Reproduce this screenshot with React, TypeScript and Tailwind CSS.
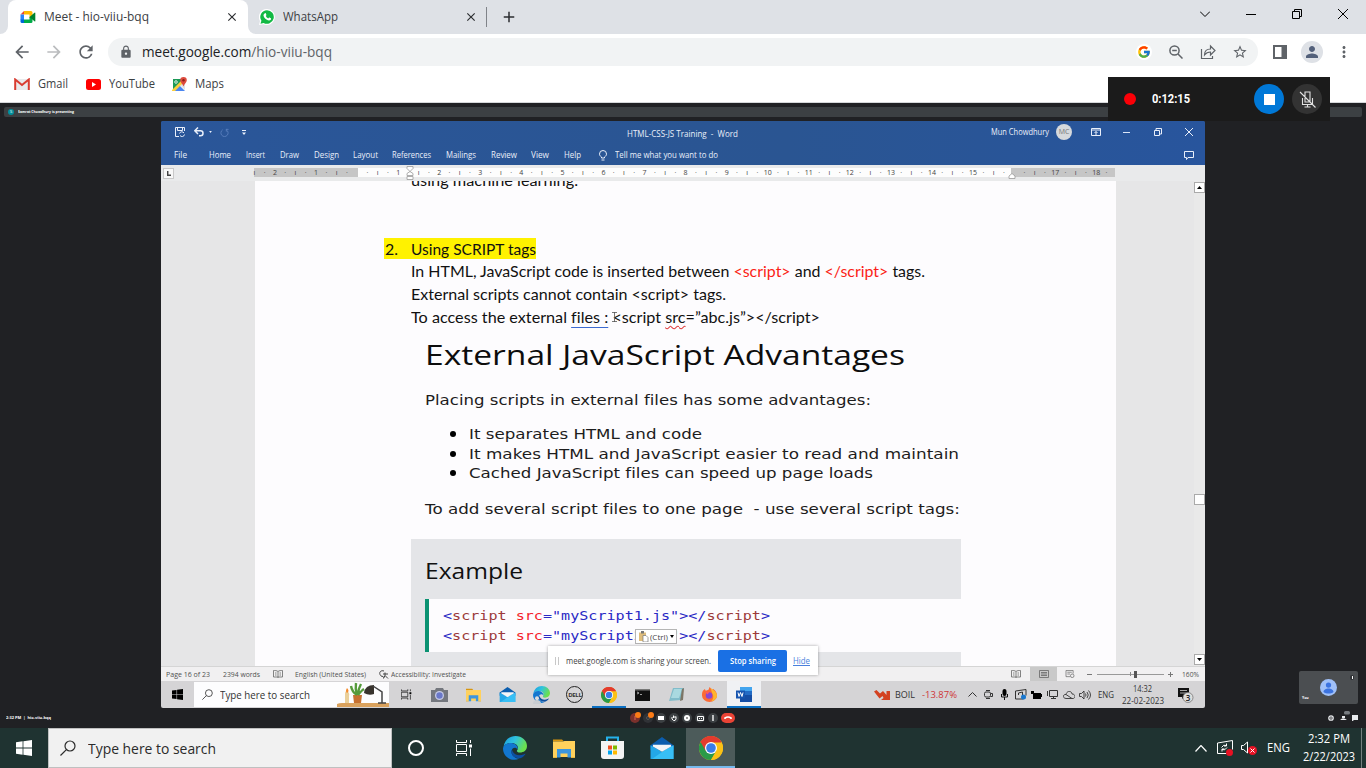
import { useLayoutEffect, useRef, useState } from "react";
import type { ReactNode } from "react";
import { MdArrowBack, MdArrowForward, MdRefresh, MdLock, MdStarBorder, MdMoreVert, MdPerson, MdClose, MdAdd } from "react-icons/md";
import { FcGoogle } from "react-icons/fc";
import { FaPhoneAlt } from "react-icons/fa";

/** One line of text, stretched horizontally to the width of its box. */
function Fit({ className = "", children }: { className?: string; children: ReactNode }) {
  const outer = useRef<HTMLSpanElement>(null);
  const inner = useRef<HTMLSpanElement>(null);
  const [scale, setScale] = useState(1);
  useLayoutEffect(() => {
    if (outer.current && inner.current && inner.current.offsetWidth) {
      const natural = parseFloat(getComputedStyle(inner.current).width);
      const target = parseFloat(getComputedStyle(outer.current).width);
      setScale(target / natural);
    }
  }, []);
  return (
    <span ref={outer} className={`block shrink-0 whitespace-pre ${className}`}>
      <span ref={inner} className="inline-block origin-left align-top" style={{ transform: `scaleX(${scale})` }}>
        {children}
      </span>
    </span>
  );
}

const Cell = ({ className = "", children }: { className?: string; children?: ReactNode }) => (
  <div className={`flex shrink-0 items-center justify-center ${className}`}>{children}</div>
);

/* ---------- logos ---------- */
const Chrome = ({ className }: { className: string }) => (
  <svg viewBox="0 0 48 48" className={className}>
    <circle cx="24" cy="24" r="24" fill="#fbc116" />
    <path d="M24 24 L3.2 12 A24 24 0 0 1 44.8 12 Z" fill="#e33b2e" />
    <path d="M24 24 L3.2 12 A24 24 0 0 0 24 48 L34.4 30 Z" fill="#2a9a48" />
    <path d="M24 12 H44.8 A24 24 0 0 1 24 48 L34.4 30Z" fill="#fbc116" />
    <path d="M24 13 H44.8 A24 24 0 0 0 3.2 12 L13.6 30Z" fill="#e33b2e" />
    <circle cx="24" cy="24" r="12" fill="#fff" />
    <circle cx="24" cy="24" r="9.6" fill="#3b7de8" />
  </svg>
);
const Edge = ({ className }: { className: string }) => (
  <svg viewBox="0 0 48 48" className={className}>
    <defs>
      <linearGradient id="edgeTop" x1="0" x2="1" y1="0" y2="0.4">
        <stop offset="0" stopColor="#1a9be0" />
        <stop offset=".5" stopColor="#2fc2df" />
        <stop offset="1" stopColor="#6be04d" />
      </linearGradient>
    </defs>
    <path d="M1 22 C3 8 13 0 25 0 C38 0 48 9 48 20 C48 29 41 33 34 33 C29 33 27 31 28 29 C33 23 28 14 17 14 C9 14 3 17 1 22Z" fill="url(#edgeTop)" />
    <path d="M0 25 C1 17 9 13 17 14 C26 15 31 22 29 27 C26 21 18 23 17 30 C16 40 27 46 33 45 C18 53 0 42 0 25Z" fill="#1277d0" />
    <path d="M17 29 C15 39 25 46 36 44 C40 42 43 39 45 36 C44 35 43 36 41 37 C31 41 21 37 18 28Z" fill="#0c4fa0" />
  </svg>
);
const Folder = ({ className }: { className: string }) => (
  <svg viewBox="0 0 44 38" className={className}>
    <path d="M0 1h18l4 4H0z" fill="#d9960f" />
    <path d="M0 5h20l3-1h21v32H0z" fill="#ffd15c" />
    <path d="M8 20h28v17h-7V29H15v8H8z" fill="#3b95dd" />
    <path d="M0 36h8v2H0zM36 36h8v2h-8z" fill="#e9b63e" />
  </svg>
);
const Mail = ({ className }: { className: string }) => (
  <svg viewBox="0 0 48 46" className={className}>
    <path d="M0 17 24 0l24 17v10H0z" fill="#0b5dae" />
    <path d="M0 17v29h48V17L24 31z" fill="#23a7e8" />
    <path d="M48 17v29H3L28 29z" fill="#38bff5" />
    <path d="M5 16h38v4L24 31 5 20z" fill="#f2f5f8" />
  </svg>
);
const WindowsLogo = ({ className }: { className: string }) => (
  <svg viewBox="0 0 16 16" fill="currentColor" className={className}>
    <path d="M0 2.2 6.6 1.3v6.3H0zM7.4 1.2 16 0v7.6H7.4zM0 8.4h6.6v6.3L0 13.8zM7.4 8.4H16V16l-8.6-1.2z" />
  </svg>
);
const TaskView = ({ className }: { className: string }) => (
  <svg viewBox="0 0 17 16" fill="none" stroke="currentColor" className={className}>
    <path d="M.5 0v2.5h10V0M.5 16v-2.5h10V16M.5 4.5h10v7H.5zM14.5 0v3M14.5 8.5V16" />
    <path d="M13 4.5h3v3h-3z" fill="currentColor" stroke="none" />
  </svg>
);
const Magnifier = ({ className }: { className: string }) => (
  <svg viewBox="0 0 16 16" fill="none" stroke="currentColor" strokeWidth="1.2" className={className}>
    <circle cx="10" cy="6" r="5" />
    <path d="M6.4 9.6.5 15.5" />
  </svg>
);
const Person = ({ className }: { className: string }) => (
  <svg viewBox="0 0 18 18" className={className}>
    <circle cx="9" cy="9" r="9" fill="#a0c0f8" />
    <circle cx="9" cy="6.4" r="2.8" fill="#3c73e0" />
    <path d="M3.7 13.7c0-5 10.6-5 10.6 0-2.6 2.3-8 2.3-10.6 0z" fill="#3c73e0" />
  </svg>
);

/* ---------- browser chrome ---------- */
function TabStrip() {
  return (
    <div className="flex h-[34px] bg-[#dee1e6] text-[12px] leading-[18px] text-[#3c4043]">
      <div className="w-2 bg-white"><div className="h-full rounded-br-lg bg-[#dee1e6]" /></div>
      <div className="flex w-[240px] items-center rounded-t-lg bg-white pl-3">
        <svg viewBox="0 0 16 14" className="h-[14px] w-4">
          <path d="M4 1h7a1.500 1.500 0 0 1 1.500 1.500V7l-3 1V4.500H4z" fill="#ffba00" />
          <path d="M.5 4.500 4 1v3.500z" fill="#e94235" />
          <path d="M.5 4.500H4V10H.5z" fill="#2684fc" />
          <path d="M.5 9.500H4V13H2A1.500 1.500 0 0 1 .5 11.500z" fill="#0066da" />
          <path d="M4 9.500h5.500V7h3v4.500A1.500 1.500 0 0 1 11 13H4z" fill="#00ac47" />
          <path d="m9.500 7 5-4.300q.8-.5.800.4v7.800q0 .9-.8.4z" fill="#00832d" />
        </svg>
        <Fit className="ml-2 w-[105px]">Meet - hio-viiu-bqq</Fit>
        <MdClose className="ml-[76px] size-[14px] shrink-0 text-[#2b2d30]" />
      </div>
      <div className="w-[11px] bg-white"><div className="h-full rounded-bl-lg bg-[#dee1e6]" /></div>
      <div className="flex items-center">
        <svg viewBox="0 0 16 16" className="size-4">
          <path d="M8 0a8 8 0 1 1-3.600 15.200L0 16l1-4A8 8 0 0 1 8 0z" fill="#fff" />
          <path d="M8 1.200a6.800 6.800 0 1 1-3.400 12.700L1.500 14.700l.9-3A6.800 6.800 0 0 1 8 1.200z" fill="#12b944" />
          <path d="M5.900 4.200c.4-.2.700-.1.900.3l.6 1.300c.1.300 0 .5-.6 1.200.5 1.100 1.300 1.900 2.500 2.400.6-.8.800-1 1.200-.8l1.300.7c.5.300.3 1.200-.3 1.700-1 .8-2.400.5-4-.4-1.600-1-2.900-2.600-3-4-.1-1 .6-2 1.400-2.400z" fill="#fff" />
        </svg>
        <Fit className="ml-2 w-[55px]">WhatsApp</Fit>
        <MdClose className="ml-[126px] size-[14px] text-[#2b2d30]" />
        <div className="ml-[8px] h-5 w-px bg-[#808389]" />
        <MdAdd className="ml-[13px] size-[18px] text-[#2b2d30]" />
      </div>
      <div className="ml-auto flex h-7 text-black">
        <Cell className="w-[46px]"><svg viewBox="0 0 10 6" className="h-[6px] w-[10px]" fill="none" stroke="currentColor"><path d="m0 .5 5 5 5-5" /></svg></Cell>
        <Cell className="w-[46px]"><div className="h-px w-[10px] bg-black" /></Cell>
        <Cell className="w-[46px]"><svg viewBox="0 0 10 10" className="size-[10px]" fill="none" stroke="currentColor"><path d="M.5 2.5h7v7h-7zM2.500 2.500v-2h7v7h-2" /></svg></Cell>
        <Cell className="w-[46px]"><svg viewBox="0 0 10 10" className="size-[10px]" fill="none" stroke="currentColor"><path d="m0 0 10 10M10 0 0 10" /></svg></Cell>
      </div>
    </div>
  );
}

function Toolbar() {
  return (
    <div className="flex h-9 items-center bg-white text-[#5f6368]">
      <Cell className="ml-[6px] w-8"><MdArrowBack className="size-5" /></Cell>
      <Cell className="w-8"><MdArrowForward className="size-5 text-[#babcbe]" /></Cell>
      <Cell className="w-8"><MdRefresh className="size-5" /></Cell>
      <div className="ml-[6px] flex h-7 w-[1150px] items-center rounded-full bg-[#f1f3f4]">
        <MdLock className="ml-[11px] size-[14px]" />
        <Fit className="ml-[9px] w-[190px] text-[14px] leading-5"><span className="text-[#202124]">meet.google.com</span>/hio-viiu-bqq</Fit>
        <div className="ml-auto mr-[2px] flex">
          <Cell className="w-8"><Cell className="size-4 rounded-full bg-white"><FcGoogle className="size-[14px]" /></Cell></Cell>
          <Cell className="w-8"><svg viewBox="0 0 14 14" className="size-[14px]" fill="none" stroke="currentColor" strokeWidth="1.500"><circle cx="5.500" cy="5.500" r="4.600" /><path d="m9 9 4.500 4.500M3.200 5.500h4.600" /></svg></Cell>
          <Cell className="w-8"><svg viewBox="0 0 16 16" className="size-4" fill="none" stroke="currentColor" strokeWidth="1.200"><path d="M1.500 5v9.500h11V12M4.500 11c0-4 2.500-6 6-6V2l4.500 4.500L10.500 11V8C8 8 6 9 4.500 11z" /></svg></Cell>
          <Cell className="w-8"><MdStarBorder className="size-4" /></Cell>
        </div>
      </div>
      <Cell className="ml-[6px] w-8"><svg viewBox="0 0 14 14" className="size-[14px]"><path d="M0 0h14v14H0z" fill="currentColor" /><path d="M2 2h6.500v10H2z" fill="#fff" /></svg></Cell>
      <Cell className="w-8"><Cell className="size-[22px] rounded-full bg-[#dee1e6]"><MdPerson className="size-[18px] text-[#53607a]" /></Cell></Cell>
      <Cell className="w-8"><MdMoreVert className="size-[18px]" /></Cell>
    </div>
  );
}

function Bookmarks() {
  return (
    <div className="flex h-[33px] items-center border-b border-[#d5d7da] bg-white pb-[4px] pl-[14px] text-[12px] leading-[18px] text-[#3c4043]">
      <svg viewBox="0 0 16 12" className="h-3 w-4"><path d="M1 1h14v11H1z" fill="#e9eaec" /><path d="M1.200 12V1.500L8 7l6.800-5.500V12" fill="none" stroke="#d93c31" strokeWidth="2" /></svg>
      <Fit className="-mt-px ml-2 w-[30px]">Gmail</Fit>
      <svg viewBox="0 0 15 11" className="ml-[18px] h-[11px] w-[15px]"><rect width="15" height="11" rx="2.500" fill="#f00" /><path d="m6 3 4 2.500L6 8z" fill="#fff" /></svg>
      <Fit className="-mt-px ml-2 w-[46px]">YouTube</Fit>
      <svg viewBox="0 0 15 15" className="ml-[17px] size-[15px]">
        <path d="M1 2h12v12H1z" fill="#fff" /><path d="M1 2h11L1 13z" fill="#1c9957" /><path d="m1 14 6-6 6 6z" fill="#4a86f0" /><path d="m11 3 2 3v7L8 8z" fill="#dfe2e6" /><path d="M0 13 10 3l2 2-9 9H0z" fill="#fbcf3c" />
        <path d="M11.500 0a3.300 3.300 0 0 1 3.300 3.300c0 2.200-2.600 3.500-3.300 6.200-.7-2.700-3.300-4-3.300-6.200A3.300 3.300 0 0 1 11.500 0z" fill="#dd4b3e" /><circle cx="11.500" cy="3.300" r="1.200" fill="#8c1f16" /><circle cx="4" cy="5" r="1.300" fill="none" stroke="#fff" strokeWidth=".8" />
      </svg>
      <Fit className="-mt-px ml-2 w-[29px]">Maps</Fit>
    </div>
  );
}

/* ---------- shared Word window ---------- */
function WordHeader() {
  return (
    <div className="h-11 shrink-0 bg-[#2a5696] bg-[linear-gradient(90deg,#2a5699_0%,#2a5592_60%,#28559d_100%)] text-[8.500px] leading-3 text-[#e9effa]">
      <div className="flex h-[22px] items-center">
        <svg viewBox="0 0 10 10" className="ml-[14px] size-[10px]" fill="none" stroke="currentColor"><path d="M4 9.500H.5v-9h9V4M2.500 1v2.500h5V1" /><path d="M4.500 6.500a2.500 2.500 0 0 1 4.500-.5M9.500 7.500a2.500 2.500 0 0 1-4.500 1" /></svg>
        <svg viewBox="0 0 10 10" className="ml-[9px] size-[10px]" fill="none" stroke="currentColor" strokeWidth="1.500"><path d="M4 .5.8 3.800 4 7M1 3.800h5.500a2.500 2.500 0 0 1 0 5H5" /></svg>
        <svg viewBox="0 0 4 3" className="ml-[5px] h-[2px] w-[3px]" fill="currentColor"><path d="M0 0h4L2 3z" /></svg>
        <svg viewBox="0 0 10 10" className="ml-[8px] size-[9px] text-[#5a80bd]" fill="none" stroke="currentColor"><path d="M7 1.500h2.500M7 1v3M7 2a4 4 0 1 1-4 0" /></svg>
        <svg viewBox="0 0 4 5" className="ml-[13px] h-[5px] w-1" fill="currentColor"><path d="M0 0h4v1H0zM0 2.500h4L2 5z" /></svg>
        <Fit className="ml-[381px] mt-[3px] w-[111px]">HTML-CSS-JS Training  -  Word</Fit>
        <Fit className="ml-[253px] w-[58px]">Mun Chowdhury</Fit>
        <Cell className="ml-[7px] size-4 rounded-full bg-[#d6d9dc] text-[7px] text-[#777]">MC</Cell>
        <svg viewBox="0 0 10 8" className="ml-[19px] h-2 w-[10px]" fill="none" stroke="currentColor"><path d="M.5.5h9v7h-9zM.5 2h9M5 7V3.500M3.500 5 5 3.500 6.500 5" /></svg>
        <div className="ml-[22px] h-px w-[7px] bg-[#dce6f7]" />
        <svg viewBox="0 0 8 8" className="ml-[24px] size-[8px]" fill="none" stroke="currentColor"><path d="M.5 2.500h5v5h-5zM2 2.500V.5h5.500V6h-2" /></svg>
        <svg viewBox="0 0 8 8" className="ml-[23px] size-2" fill="none" stroke="currentColor"><path d="m0 0 8 8M8 0 0 8" /></svg>
      </div>
      <div className="flex h-[22px] items-center pt-0.5">
        <Fit className="ml-[13px] w-[13px]">File</Fit>
        <Fit className="ml-[22px] w-[22px]">Home</Fit>
        <Fit className="ml-[15px] w-[19px]">Insert</Fit>
        <Fit className="ml-[15px] w-[19px]">Draw</Fit>
        <Fit className="ml-[15px] w-[25px]">Design</Fit>
        <Fit className="ml-[14px] w-[25px]">Layout</Fit>
        <Fit className="ml-[14px] w-[39px]">References</Fit>
        <Fit className="ml-[15px] w-[30px]">Mailings</Fit>
        <Fit className="ml-[15px] w-[26px]">Review</Fit>
        <Fit className="ml-[14px] w-[18px]">View</Fit>
        <Fit className="ml-[15px] w-[17px]">Help</Fit>
        <svg viewBox="0 0 8 11" className="ml-[18px] h-[11px] w-2" fill="none" stroke="currentColor"><path d="M2.500 8V7C1 6 .5 5 .5 4a3.500 3.500 0 0 1 7 0c0 1-.5 2-2 3v1zM2.500 10h3" /></svg>
        <Fit className="ml-[8px] w-[103px]">Tell me what you want to do</Fit>
        <svg viewBox="0 0 10 9" className="ml-[466px] h-[9px] w-[10px]" fill="none" stroke="currentColor"><path d="M.5.5h9v6H4L2.500 8.500v-2h-2z" /></svg>
      </div>
    </div>
  );
}

function Ruler() {
  const marks = Array.from({ length: 84 }, (_, i) => i - 10).map((k) => {
    if (k === 0 || k === 5 || k === 64) return "";
    if (k % 4 === 0) return String(Math.abs(k / 4));
    return k % 2 === 0 ? "ı" : "·";
  });
  return (
    <div className="flex h-4 shrink-0 bg-[#e9eaeb]">
      <Cell className="ml-[2px] mt-[3px] size-[11px] border border-[#c8c8c8] bg-[#f8f8f8]"><svg viewBox="0 0 4 5" className="h-[5px] w-1" fill="none" stroke="#444" strokeWidth="1.500"><path d="M.7 0v4.300H4" /></svg></Cell>
      <div className="relative ml-[80px] mt-[3px] h-[9px] w-[861px] bg-[linear-gradient(90deg,#c6c6c6_0_104px,#fdfdfd_104px_757px,#c6c6c6_757px)]">
        <div className="-ml-[4.700px] flex h-[9px] text-[7px] leading-[9px] text-[#444]">
          {marks.map((m, i) => <Cell key={i} className="w-[10.275px]">{m}</Cell>)}
        </div>
        <svg viewBox="0 0 8 14" className="absolute -top-[2px] left-[152px] h-[14px] w-2" fill="#fff" stroke="#999" strokeWidth=".8"><path d="M1 .5h6v2L4 5.500 1 2.500zM1 9.500v-2L4 5.500l3 2v2zM1 10.500h6v3H1z" /></svg>
        <svg viewBox="0 0 8 6" className="absolute left-[754px] top-[5px] h-[6px] w-2" fill="#fff" stroke="#999" strokeWidth=".8"><path d="M1 5.500V3l3-2.500L7 3v2.500z" /></svg>
      </div>
    </div>
  );
}

const Code = ({ file }: { file: string }) => (
  <Fit className="w-[327px] text-[#2a29c4]">
    {"<"}<span className="text-[#9c3a3a]">script</span> <span className="text-[#f4242c]">src</span>={`"${file}"></`}<span className="text-[#9c3a3a]">script</span>{">"}
  </Fit>
);

function Doc() {
  return (
    <div className="flex h-[485px] shrink-0 bg-[#e6e6e7]">
      <div className="relative ml-[94px] h-full w-[861px] overflow-hidden bg-[#fdfcfe] pl-[156px] [font-variant-ligatures:none]">
        <div className="-mt-[13px] font-[Lato,sans-serif] text-[16px] leading-[23px] text-[#111]">
          <Fit className="w-[167px]">using machine learning.</Fit>
          <div className="-ml-[27px] mt-[47px] flex h-[21px] w-[152px] bg-[#fff200] leading-[21px]">
            <Fit className="ml-px w-[13px]">2.</Fit>
            <Fit className="ml-[13px] w-[125px]">Using SCRIPT tags</Fit>
          </div>
          <Fit className="w-[514px]">In HTML, JavaScript code is inserted between <span className="text-[#fb1e17]">{"<script>"}</span> and <span className="text-[#fb1e17]">{"</script>"}</span> tags.</Fit>
          <Fit className="w-[315px]">{"External scripts cannot contain <script> tags."}</Fit>
          <Fit className="w-[409px]">To access the external <span className="underline decoration-[#3c6ad0] decoration-1 underline-offset-4">files :</span>{" <script "}<span className="underline decoration-[#e03c3c] decoration-wavy decoration-[0.7px] underline-offset-2">src</span>{"=”abc.js”></script>"}</Fit>
        </div>
        <Fit className="ml-[14px] mt-[9px] w-[480px] text-[27px] leading-9 text-[#0d0d0d]">External JavaScript Advantages</Fit>
        <div className="font-['DejaVu_Sans',sans-serif] text-[13.500px] leading-5 text-[#1d1d1d]">
          <Fit className="ml-[14px] mt-[17px] w-[446px]">Placing scripts in external files has some advantages:</Fit>
          <ul className="ml-[39px] mt-[14px]">
            <li className="flex h-5 items-center"><i className="mr-[13px] size-[6px] rounded-full bg-black" /><Fit className="w-[233px]">It separates HTML and code</Fit></li>
            <li className="flex h-[19px] items-center"><i className="mr-[13px] size-[6px] rounded-full bg-black" /><Fit className="w-[490px]">It makes HTML and JavaScript easier to read and maintain</Fit></li>
            <li className="flex h-5 items-center"><i className="mr-[13px] size-[6px] rounded-full bg-black" /><Fit className="w-[404px]">Cached JavaScript files can speed up page loads</Fit></li>
          </ul>
          <Fit className="ml-[14px] mt-[16px] w-[535px]">To add several script files to one page  - use several script tags:</Fit>
        </div>
        <div className="mt-[20px] h-[140px] w-[550px] bg-[#e4e5e8] pl-[14px] pt-[17px]">
          <Fit className="w-[98px] text-[21.500px] leading-[30px] text-[#111]">Example</Fit>
          <div className="mt-[13px] h-[53px] border-l-4 border-[#0b9272] bg-[#fdfcfe] pl-[14px] pt-[7px] font-['DejaVu_Sans_Mono',monospace] text-[12.500px] leading-5">
            <Code file="myScript1.js" />
            <Code file="myScript2.js" />
          </div>
        </div>
        <div className="absolute left-[380px] top-[448px] flex h-[15px] w-[42px] items-center border border-[#b5b5b5] bg-white text-[8px] text-[#444]">
          <svg viewBox="0 0 11 11" className="ml-[2px] h-[11px] w-[11px]"><path d="M1 1.500h7V10H1z" fill="#dfbd7c" /><path d="M3 0h3v2.500H3z" fill="#777" /><path d="M5 4.500h3l2 2V11H5z" fill="#fff" stroke="#777" strokeWidth=".7" /></svg>
          <Fit className="ml-px w-[18px]">(Ctrl)</Fit>
          <svg viewBox="0 0 4 3" className="ml-[2px] h-[3px] w-1"><path d="M0 0h4L2 3z" /></svg>
        </div>
        <svg viewBox="0 0 5 10" className="absolute left-[357px] top-[131px] h-[10px] w-[5px]" fill="none" stroke="#555" strokeWidth=".8"><path d="M0 .5h5M0 9.500h5M2.500 0v10" /></svg>
      </div>
      <div className="ml-auto flex w-[11px] flex-col bg-[#e9e9e9]">
        <Cell className="mt-px size-[11px] border border-[#aaa] bg-white"><svg viewBox="0 0 5 3" className="h-[3px] w-[5px]"><path d="M0 3h5L2.500 0z" /></svg></Cell>
        <div className="mt-[301px] size-[11px] border border-[#aaa] bg-white" />
        <Cell className="mt-auto mb-px size-[11px] border border-[#aaa] bg-white"><svg viewBox="0 0 5 3" className="h-[3px] w-[5px]"><path d="M0 0h5L2.500 3z" /></svg></Cell>
      </div>
    </div>
  );
}

const BookIcon = ({ className }: { className: string }) => (
  <svg viewBox="0 0 10 8" className={className} fill="none" stroke="#666" strokeWidth=".8"><path d="M5 1.500V8M5 1.500C4 .5 2 .5.500.5v6.500H5h4.500V.5C8 .5 6 .5 5 1.500M6.500 3H8M6.500 5H8M2 3h1.500M2 5h1.500" /></svg>
);

function StatusBar() {
  return (
    <div className="flex h-[15px] shrink-0 items-center border-t border-[#d5d5d5] bg-[#f1f0f1] text-[7.500px] leading-3 text-[#505050]">
      <Fit className="ml-[5px] w-[44px]">Page 16 of 23</Fit>
      <Fit className="ml-[13px] w-[37px]">2394 words</Fit>
      <BookIcon className="ml-[13px] h-2 w-[10px]" />
      <Fit className="ml-[12px] w-[71px]">English (United States)</Fit>
      <svg viewBox="0 0 10 9" className="ml-[13px] h-[9px] w-[10px]" fill="none" stroke="#444"><path d="M5 1C2 0 0 2 1 4.500c.5 1 1 1.500 2 2M6 2.500v3M4 4h5M6 5.500 4.500 8.500M6 5.500l3 3M3 6l2 1.500" /></svg>
      <Fit className="ml-[2px] w-[75px]">Accessibility: Investigate</Fit>
      <BookIcon className="ml-[545px] h-2 w-[10px]" />
      <Cell className="ml-[9px] h-[14px] w-[27px] bg-[#c9c9c9]"><svg viewBox="0 0 10 8" className="h-2 w-[10px]" fill="none" stroke="#666" strokeWidth=".8"><path d="M.5.5h9v7h-9zM2 2.500h6M2 4h6M2 5.500h6" /></svg></Cell>
      <svg viewBox="0 0 10 9" className="ml-[8px] h-2 w-[10px]" fill="none" stroke="#666" strokeWidth=".8"><path d="M5 7.500H.5v-7h8V4M2 2.500h5M2 4.500h3" /><circle cx="7.500" cy="6.500" r="2" /></svg>
      <div className="ml-[12px] h-px w-[5px] bg-[#777]" />
      <div className="ml-[5px] flex h-2 w-[67px] items-center bg-[linear-gradient(#999,#999)] bg-[length:100%_1px] bg-center bg-no-repeat">
        <div className="ml-[33px] h-[4px] w-px bg-[#888]" /><div className="ml-[3px] h-[7px] w-[3px] bg-[#555]" />
      </div>
      <svg viewBox="0 0 5 5" className="ml-[4px] size-[5px]" stroke="#777"><path d="M0 2.500h5M2.500 0v5" /></svg>
      <Fit className="ml-[9px] w-[17px]">160%</Fit>
    </div>
  );
}

function SharedTaskbar() {
  const app = "h-full w-[33.750px]";
  return (
    <div className="flex h-[27px] shrink-0 items-center bg-[#d5d4d6] text-[#333]">
      <Cell className="w-[33px]"><WindowsLogo className="size-[11px] text-black" /></Cell>
      <div className="flex h-[25px] w-[195px] items-center bg-[#fdfdfe]">
        <Magnifier className="ml-2 size-[11px]" />
        <Fit className="ml-[7px] w-[90px] text-[10.500px] leading-4">Type here to search</Fit>
        <svg viewBox="0 0 52 25" className="ml-auto h-[25px] w-[52px]">
          <path d="M0 22q2-1 5-1h47v4H0z" fill="#daa25d" />
          <path d="M8 12q0-3 2-3 3 2 2 5v7H8z" fill="#ead09a" /><path d="M10 6q3 3 0 5-2-2 0-5z" fill="#f58b2c" />
          <path d="M16 13h9l-1 8h-7z" fill="#c77130" />
          <path d="M20 13Q15 10 14 4M20 13Q18 7 19 1M21 13Q21 7 24 2M21 13q4-5 6-6" stroke="#559b3b" strokeWidth="2.400" fill="none" />
          <path d="M27 11q1-8 10-8v9q-5 2-10-1z" fill="#39342e" /><path d="m36 4 9 6v11M41 21h8" stroke="#444" strokeWidth="1.500" fill="none" />
        </svg>
      </div>
      <Cell className="w-[34px]"><TaskView className="size-[11px] text-black" /></Cell>
      <Cell className={app}><svg viewBox="0 0 17 14" className="h-[14px] w-[17px]"><path d="M0 2h4l1-2h7l1 2h4v12H0z" fill="#74777e" /><circle cx="8.500" cy="7.500" r="4.500" fill="#c6cbe8" /><circle cx="8.500" cy="7.500" r="3.200" fill="#6a78c9" /></svg></Cell>
      <Cell className={app}><Folder className="h-[14px] w-[15px]" /></Cell>
      <Cell className={app}><Mail className="h-[15px] w-[17px]" /></Cell>
      <Cell className={`${app} relative`}><Edge className="size-[17px]" /><svg viewBox="0 0 8 8" className="absolute bottom-[4px] left-[9px] size-2"><circle cx="4" cy="2.200" r="2" fill="#ddd" /><path d="M0 8q0-4 4-4t4 4z" fill="#c9cdd2" /></svg></Cell>
      <Cell className={app}><Cell className="size-[17px] rounded-full border-[1.500px] border-[#222] text-[6px] font-bold leading-none tracking-[-0.3px]">DELL</Cell></Cell>
      <Cell className={`${app} border-b-2 border-[#0b6fc2] pt-0.5`}><Chrome className="size-[16px]" /></Cell>
      <Cell className={app}><svg viewBox="0 0 15 12" className="h-3 w-[15px]"><path d="M0 0h15v12H0z" fill="#101010" /><path d="M0 0h15v1.500H0z" fill="#777" /><path d="m2 3 2 1-2 1M5 5.500h2" stroke="#ddd" strokeWidth=".7" fill="none" /></svg></Cell>
      <Cell className={app}><svg viewBox="0 0 15 13" className="h-[13px] w-[15px]"><path d="M4 0h11l-3 12-12 1z" fill="#81bcca" /><path d="M5 1h8l-3 9H2z" fill="#a9d9e0" /><path d="m15 0-1 12-3 1 2-12z" fill="#7c7566" /></svg></Cell>
      <Cell className={app}><svg viewBox="0 0 16 16" className="size-[15px]"><path d="M1 4 3 2l1 2 3-1 1-3 3 3 1-1c3 2 4 5 4 7a8 7 0 0 1-16 0c0-2 0-3 1-5z" fill="#fc6b35" /><path d="M9 1c3 2 7 4 7 8 0 3-3 6-6 6 3-3 2-6 1-8z" fill="#ffb52b" /><circle cx="7.500" cy="9" r="3.500" fill="#8848d0" /><path d="M3 5h5L6 8z" fill="#ff5960" /></svg></Cell>
      <Cell className={`${app} border-b-2 border-[#0b6fc2] bg-[#f0f1f4] pt-0.5`}><svg viewBox="0 0 16 15" className="h-[15px] w-4"><path d="M4 0h12v15H4z" fill="#236bc5" /><path d="M4 0h12v4H4z" fill="#42a4ee" /><path d="M4 8h12v7H4z" fill="#154da4" /><path d="M0 3.500h9v8H0z" fill="#1654af" /><path d="m2 5.500 1 4 1.500-4 1.500 4 1-4" stroke="#fff" fill="none" /></svg></Cell>
      <svg viewBox="0 0 16 10" className="ml-[113px] h-[10px] w-4"><path d="M0 1.500 2.500 0 6 3.500 9 1l3.500 4V1H16v9H7l2.500-2L8.500 6 5.500 8.500z" fill="#d34120" /></svg>
      <Fit className="ml-[5px] mt-px w-[20px] text-[9.500px]">BOIL</Fit>
      <Fit className="ml-[7px] mt-px w-[35px] text-[9.500px] text-[#ce3536]">-13.87%</Fit>
      <svg viewBox="0 0 9 5" className="ml-[11px] h-[5px] w-[9px]" fill="none" stroke="#333"><path d="m.5 4.500 4-4 4 4" /></svg>
      <Cell className="ml-[4px] w-4"><svg viewBox="0 0 9 9" className="size-[9px]" fill="none" stroke="#333"><rect x=".5" y="2" width="6" height="5" rx="1.500" /><path d="M6.500 3.500h2v3h-2M2 .5h4M2 8.500h4" /></svg></Cell>
      <Cell className="w-4"><svg viewBox="0 0 7 11" className="h-[11px] w-[7px]"><rect x="1.500" width="4" height="7" rx="2" /><path d="M.5 5v3h6V5M3.500 8v3" fill="none" stroke="#111" /></svg></Cell>
      <Cell className="w-4"><svg viewBox="0 0 12 11" className="h-[11px] w-3" fill="none" stroke="#333"><path d="M.5 2v8h8M.5 2 11 .5v6M3.500 6V4l4-1v3" /><circle cx="8.500" cy="8" r="2.500" fill="#1977cf" stroke="none" /></svg></Cell>
      <Cell className="w-4"><svg viewBox="0 0 11 8" className="h-2 w-[11px]"><path d="M0 0h3v2h7v1h1v3h-1v2H2V3H0z" /></svg></Cell>
      <Cell className="w-4"><svg viewBox="0 0 11 9" className="h-[9px] w-[11px]" fill="none" stroke="#333"><path d="M2.500.5h8v6h-8zM6.500 6.500v2M4 8.500h5M.5 1v5" /></svg></Cell>
      <Cell className="w-4"><svg viewBox="0 0 12 8" className="h-2 w-3" fill="none" stroke="#444"><path d="M3 7.500C-1 7 0 3 3 3.500 4-1 9 0 9 3c4 0 3.500 4.500 1 4.500zM3 3.500l6 4" /></svg></Cell>
      <Cell className="w-4"><svg viewBox="0 0 12 10" className="h-[10px] w-3" fill="none" stroke="#333" strokeWidth=".9"><path d="M.5 3.500h2L5 1v8L2.500 6.500h-2zM6.500 3.500q1 1.500 0 3M8 2q2.500 3 0 6M9.500.5q4 4.500 0 9" /></svg></Cell>
      <Fit className="ml-[5px] w-[16px] text-[9px]">ENG</Fit>
      <div className="ml-[8px] flex w-[42px] flex-col items-center text-[9px] leading-[12px]"><Fit className="w-[19px]">14:32</Fit><Fit className="w-[42px]">22-02-2023</Fit></div>
      <svg viewBox="0 0 18 17" className="ml-[14px] h-[17px] w-[18px]"><path d="M0 2h11v9H6l-2 2v-2H0z" fill="#111" /><path d="M2 4.500h7M2 7h6" stroke="#ccc" strokeWidth=".8" /><circle cx="10" cy="11.500" r="5" fill="#ddd" stroke="#777" strokeWidth=".8" /><text x="7.700" y="14.500" fontSize="8" fontWeight="600" fontFamily="Open Sans, sans-serif" fill="#222">3</text></svg>
    </div>
  );
}

function SharedScreen() {
  return (
    <div className="relative ml-[161px] mt-1 flex h-[587px] w-[1044px] flex-col overflow-hidden rounded-[2px]">
      <WordHeader />
      <Ruler />
      <Doc />
      <StatusBar />
      <SharedTaskbar />
      <div className="absolute left-[387px] top-[525px] flex h-[29px] w-[270px] items-center bg-white text-[8.500px] leading-3 text-[#444] shadow-[0_0_3px_rgba(0,0,0,0.35)]">
        <div className="ml-[7px] h-[8px] w-[4px] border-x border-[#c8c8c8]" />
        <Fit className="ml-[7px] w-[145px]">meet.google.com is sharing your screen.</Fit>
        <Cell className="ml-[7px] h-[22px] w-[69px] rounded-[2px] bg-[#1a70e4] font-semibold text-white"><Fit className="w-[46px]">Stop sharing</Fit></Cell>
        <Fit className="ml-[6px] w-[17px] text-[#4a80dc]"><span className="underline">Hide</span></Fit>
      </div>
    </div>
  );
}

/* ---------- Meet ---------- */
function MeetFooter() {
  const dot = "relative mr-[3px] size-[10px] rounded-full bg-[#3c4043] text-white";
  return (
    <div className="relative flex h-5 items-center text-white">
      <Fit className="ml-[6px] w-[45px] text-[4px] font-bold leading-[6px]">2:32 PM  |  hio-viiu-bqq</Fit>
      <div className="ml-[579px] flex items-center">
        <Cell className="relative mr-[3px] size-[10px] rounded-full bg-[#7b302c]"><div className="h-1 w-[2px] bg-[#a84a43]" /><i className="absolute -right-[1px] -top-px size-[6px] rounded-full bg-[#fa7b17]" /></Cell>
        <Cell className="relative mr-[3px] size-[10px] rounded-full bg-[#303236]"><div className="size-[4px] rounded-sm border border-[#555]" /><i className="absolute -right-[1px] -top-px size-[6px] rounded-full bg-[#fa7b17]" /></Cell>
        <Cell className={dot}><div className="h-[4px] w-[6px] bg-white" /></Cell>
        <Cell className={dot}><svg viewBox="0 0 6 6" className="size-[6px]" fill="none" stroke="currentColor"><path d="M1 2v2l1.500 1.500H4L5 4V1.500M2.500 3V.5M4 3V1" /></svg></Cell>
        <Cell className={dot}><svg viewBox="0 0 6 6" className="size-[6px]"><circle cx="3" cy="3" r="3" fill="currentColor" /><circle cx="3" cy="3" r="1" fill="#777" /></svg></Cell>
        <Cell className={dot}><svg viewBox="0 0 7 5" className="h-[5px] w-[7px]" fill="none" stroke="currentColor"><path d="M.5.5h6v4h-6zM2 2.500h1M4 2.500h1" /></svg></Cell>
        <Cell className={dot}><svg viewBox="0 0 2 6" className="h-[6px] w-[2px]" fill="currentColor"><circle cx="1" cy="1" r=".9" /><circle cx="1" cy="3" r=".9" /><circle cx="1" cy="5" r=".9" /></svg></Cell>
        <Cell className="h-[10px] w-[14px] rounded-full bg-[#ea4335]"><svg viewBox="0 0 8 4" className="h-[4px] w-2" fill="none" stroke="#fff" strokeWidth="1.600"><path d="M1 3V2q3-2 6 0v1" /></svg></Cell>
      </div>
      <svg viewBox="0 0 32 10" className="mb-[5px] ml-auto mr-[7px] h-[10px] w-8" fill="#e8eaed">
        <circle cx="4" cy="7" r="2.200" fill="none" stroke="#e8eaed" strokeWidth="1.300" /><path d="M4 6v2" stroke="#e8eaed" />
        <path d="M13 9q3-3.500 7 0zM15 5h3v2h-3zM25 4h6v5h-4l-2 1.500z" /><rect x="17" y="0" width="6" height="3.500" rx="1.500" fill="#777b80" />
      </svg>
    </div>
  );
}

function Meet() {
  return (
    <div className="relative h-[625px] bg-[#202124] pt-1">
      <div className="mx-1 flex h-[10px] items-center rounded-[2px] bg-[#3c4043] text-white">
        <Cell className="ml-[4px] size-[6px] rounded-full bg-[#00909d] text-[4px] leading-none">S</Cell>
        <Fit className="ml-[4px] w-[56px] text-[4px] font-bold leading-[6px]">Samrat Chowdhury is presenting</Fit>
      </div>
      <SharedScreen />
      <MeetFooter />
      <div className="absolute left-[1299px] top-[568px] flex h-[33px] w-[59px] items-center justify-center rounded-[2px] bg-[#4b4e51]">
        <Person className="size-[17px]" />
        <div className="absolute right-1 top-1 h-[5px] w-[4px] rounded-full bg-[#303236]"><div className="mx-auto mt-px h-[3px] w-px bg-white" /></div>
        <span className="absolute bottom-1 left-[3px] text-[3.500px] font-bold leading-[4px] text-white">You</span>
      </div>
    </div>
  );
}

function Recorder() {
  return (
    <div className="absolute left-[1108px] top-[77px] flex h-11 w-[222px] items-center bg-[#1b1b1b] text-white">
      <i className="ml-4 size-3 rounded-full bg-[#fb0007]" />
      <Fit className="-mt-[3px] ml-[16px] w-[38px] font-[Roboto,sans-serif] text-[13.500px] font-bold leading-4">0:12:15</Fit>
      <Cell className="ml-[64px] size-[30px] rounded-full bg-[#0078d7]"><div className="size-[11px] bg-white" /></Cell>
      <Cell className="ml-2 size-[30px] rounded-full bg-[#333]">
        <svg viewBox="0 0 17 17" className="size-[17px]" fill="none" stroke="#e2e2e2" strokeWidth="1.100"><path d="M6 1h5v10H6zM3.500 7v6.500h10V7M8.500 13.500v3M5.500 16h6M1 1l15.500 15.500" /></svg>
      </Cell>
    </div>
  );
}

/* ---------- desktop taskbar ---------- */
function Taskbar() {
  return (
    <div className="flex h-10 items-center bg-[#1f3331] text-white">
      <Cell className="w-12"><WindowsLogo className="size-4" /></Cell>
      <div className="flex h-10 w-[344px] items-center border border-[#bfc0c0] bg-[#f1f1f1] text-[#2b2b2b]">
        <Magnifier className="ml-[11px] size-4" />
        <Fit className="ml-[12px] w-[128px] text-[15px] leading-5">Type here to search</Fit>
      </div>
      <Cell className="w-12"><div className="size-4 rounded-full border-2 border-white" /></Cell>
      <Cell className="w-[48px]"><TaskView className="ml-px h-4 w-[17px]" /></Cell>
      <Cell className="ml-[2px] w-[49px]"><Edge className="size-6" /></Cell>
      <Cell className="w-[49px]"><Folder className="h-[19px] w-[22px]" /></Cell>
      <Cell className="w-[49px]">
        <svg viewBox="0 0 23 24" className="h-6 w-[23px]"><path d="M6 6V1.500h11V6" fill="none" stroke="#25b1ea" strokeWidth="2" /><path d="M0 5h23v15q0 3-3 3H3q-3 0-3-3z" fill="#f4f4f4" /><path d="M7 9.500h4v4H7z" fill="#f25022" /><path d="M12 9.500h4v4h-4z" fill="#7fba00" /><path d="M7 14.500h4v4H7z" fill="#00a4ef" /><path d="M12 14.500h4v4h-4z" fill="#ffb900" /></svg>
      </Cell>
      <Cell className="w-[49px]"><Mail className="h-[22px] w-6" /></Cell>
      <Cell className="h-full w-[49px] border-b-2 border-[#76b9ed] bg-[#4c5b5a] pt-0.5"><Chrome className="size-6" /></Cell>
      <svg viewBox="0 0 12 7" className="ml-[460px] h-[7px] w-3" fill="none" stroke="currentColor" strokeWidth="1.200"><path d="m.5 6.500 5.500-6 5.500 6" /></svg>
      <svg viewBox="0 0 17 16" className="ml-[10px] h-4 w-[17px]" fill="none" stroke="currentColor"><path d="M.5 3v10.500h9M.5 3 15.500.5v9M4.500 7.500q2-3.500 5-2M9.500 3.500v2.500H7M10 7.500q-2 3.500-5 2M5 11.500V9h2.500" /><circle cx="12.500" cy="12.500" r="3.500" fill="#e81123" stroke="none" /></svg>
      <svg viewBox="0 0 16 14" className="ml-[7px] h-[14px] w-4" fill="none" stroke="currentColor"><path d="M.5 4.500h2L6.500 1v11L2.500 8.500h-2z" /><circle cx="11.500" cy="9.500" r="4.500" fill="#e81123" stroke="none" /><path d="m9.500 7.500 4 4M13.500 7.500l-4 4" /></svg>
      <Fit className="ml-[10px] w-[23px] text-[12px]">ENG</Fit>
      <div className="ml-[13px] flex w-[52px] flex-col items-center text-[12px] leading-[18px]"><Fit className="w-[42px]">2:32 PM</Fit><Fit className="w-[52px]">2/22/2023</Fit></div>
      <div className="ml-auto mr-1 h-full w-px bg-[#74807f]" />
    </div>
  );
}

export default function App() {
  return (
    <div className="relative h-[768px] w-[1366px] overflow-hidden bg-white font-['Open_Sans','Noto_Sans',sans-serif]">
      <TabStrip />
      <Toolbar />
      <Bookmarks />
      <Meet />
      <Taskbar />
      <Recorder />
    </div>
  );
}
